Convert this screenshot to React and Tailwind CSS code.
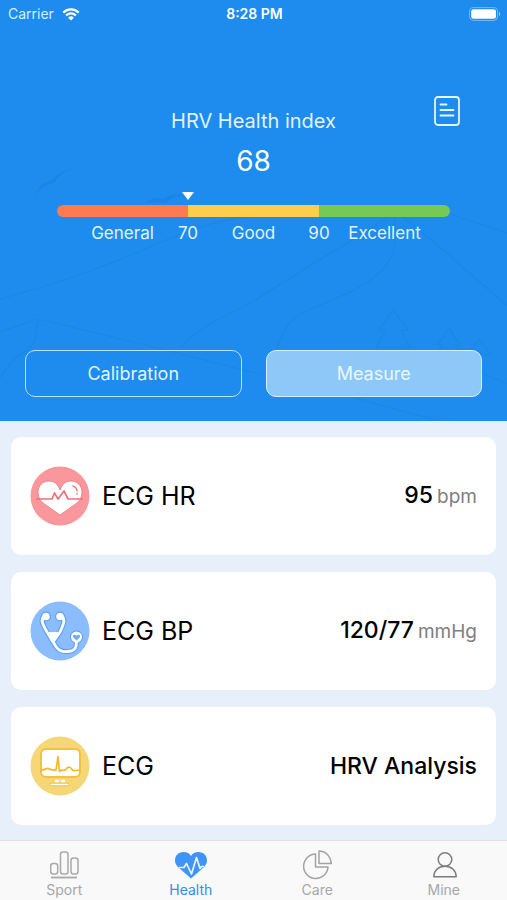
import React from "react";
import clsx from "clsx";

function WifiIcon() {
  return (
    <svg viewBox="0 0 18 13" className="h-[13px] w-[18px]" fill="none">
      <path d="M1.3 4.6a11 11 0 0 1 15.4 0" stroke="#fff" strokeWidth="2.2" />
      <path d="M4.1 7.4a7 7 0 0 1 9.8 0" stroke="#fff" strokeWidth="2.1" />
      <path d="M9 12.6 6.1 9.7a4.1 4.1 0 0 1 5.8 0z" fill="#fff" />
    </svg>
  );
}

function BatteryIcon() {
  return (
    <svg viewBox="0 0 32 14" className="h-[14px] w-8" fill="none">
      <rect x="0.6" y="0.6" width="28" height="12.8" rx="4" stroke="#fff" strokeOpacity="0.4" />
      <rect x="2.2" y="2.2" width="24.8" height="9.6" rx="2.4" fill="#fff" />
      <path d="M30 4.8c1.6.6 1.6 3.8 0 4.4z" fill="#fff" fillOpacity="0.5" />
    </svg>
  );
}

function ReportIcon() {
  return (
    <svg viewBox="0 0 26 30" className="h-[30px] w-[26px]" fill="none" stroke="#e4f6ff" strokeWidth="1.8" strokeLinecap="round">
      <rect x="1" y="1" width="24" height="28" rx="3" />
      <path d="M6.5 8.5h6M6.5 14h13M6.5 19.5h13" />
    </svg>
  );
}

// Faint mountain scene behind the header
function Landscape() {
  return (
    <svg
      viewBox="0 0 507 421"
      preserveAspectRatio="xMidYMid slice"
      className="absolute inset-0 h-full w-full"
      fill="none"
      stroke="#1a80dc"
      strokeOpacity="0.45"
      strokeWidth="1.2"
    >
      <path d="M0 299C50 286 100 269 150 247S215 222 260 214" />
      <path d="M0 332 37 319M38 319l-2 16c-1 10-8 15-16 20S5 370 0 378" />
      <path d="M38 319 150 346 262 375M355 398l95 26" />
      <path d="M180 348c20-22 42-30 70-45 35-21 70-45 105-64l40-27" />
      <path d="M395 212v32c-5 35-45 49-85 65-20 8-27 20-33 40" />
      <path d="M451 214c20 8 38 12 56 19M400 215c40 30 70 60 107 90" />
      <path d="M393 310l-14 20h6l-9 18h34l-9-18h7zM449 328l-11 17h5l-5 6h22l-5-6h5zM479 339l-12 16h24zM462 364l45 20" />
      <g fill="#1a7edb" stroke="none" fillOpacity="0.5">
        <path d="M35 195c5-12 11-12 17-15 5-6 9-8 17-11-7 5-11 8-14 13-7 4-13 3-20 13z" />
        <path d="M145 204c6-7 12-6 19-5 5-4 11-6 20-4-8 1-14 3-18 9-6-3-13-2-21 0z" />
      </g>
    </svg>
  );
}

function HeartRateIcon() {
  return (
    <svg viewBox="0 0 60 60" className="size-[60px]" fill="none">
      <circle cx="30" cy="30" r="29.5" fill="#f9979c" />
      <path
        d="M30 49 13 37C9.5 34 8 30 8 26c0-6 4.5-11 11-11 5 0 9 3 11 9 2-6 6-9 11-9 6.5 0 11 5 11 11 0 4-1.5 8-5 11z"
        fill="#fff"
        stroke="#f58489"
      />
      <path d="M6 33h16l2.5-6 3.5 6 6-8 4 8h15" stroke="#ef7074" strokeWidth="1.7" strokeLinejoin="round" />
      <path d="M43 20c2.5 1 4 3 4 5M47 27.5v.5" stroke="#f37c81" strokeWidth="1.5" strokeLinecap="round" />
    </svg>
  );
}

function StethoscopeIcon() {
  return (
    <svg viewBox="0 0 60 60" className="size-[60px]" fill="none" strokeLinecap="round" strokeLinejoin="round">
      <circle cx="30" cy="30" r="29.5" fill="#8bbcfd" />
      <g stroke="#5b9ff8" strokeWidth="5">
        <path d="M14 15c-4 4-1 9 3 16l6 10M32 15c4 4 1 9-2 16l-7 10" />
        <path d="M23 40c4 10 9 11 15 10.5 8-.5 8.5-5.5 8.5-10" />
        <circle cx="16" cy="15.5" r="2.5" />
        <circle cx="30" cy="15.5" r="2.5" />
        <circle cx="46.5" cy="36" r="4" />
      </g>
      <path d="M17 31h13l-7 10z" fill="#fff" />
      <g stroke="#fff" strokeWidth="2.8">
        <path d="M14 15c-4 4-1 9 3 16l6 10M32 15c4 4 1 9-2 16l-7 10" />
        <path d="M23 40c4 10 9 11 15 10.5 8-.5 8.5-5.5 8.5-10" />
      </g>
      <circle cx="16" cy="15.5" r="3.8" fill="#fff" />
      <circle cx="30" cy="15.5" r="3.8" fill="#fff" />
      <circle cx="46.5" cy="36" r="5.5" fill="#fff" />
      <path d="M46.5 39.5 43 36c-.5-2.5 2.5-3 3.500-1 1-2 4-1.5 3.5 1z" fill="#6dabfa" />
    </svg>
  );
}

function MonitorIcon() {
  return (
    <svg viewBox="0 0 60 60" className="size-[60px]" fill="none" strokeLinecap="round" strokeLinejoin="round">
      <circle cx="30" cy="30" r="29.5" fill="#f6d777" />
      <rect x="11" y="13" width="39" height="28" rx="5" fill="#fff" stroke="#f2c23a" strokeWidth="2" />
      <path d="M12 34c3 0 4-2 6.5-1.5 2.5 2 5 1.5 7.5 1.5l2-13.5 1.5 15 2-1.5c2 .5 3 .5 4.5-.5 2-4 5-2 6 0s4 1 7 .5" stroke="#efbb2a" strokeWidth="1.7" />
      <path d="M21 48.5h17" stroke="#f0c23c" strokeWidth="3.4" />
      <path d="M21 48.5h17" stroke="#fff" strokeWidth="1.4" />
      <path d="M26 45h2M32 45h2" stroke="#fff" strokeWidth="2.6" />
    </svg>
  );
}

function SportIcon() {
  return (
    <svg viewBox="0 0 30 30" className="size-[30px]" fill="none" stroke="#a9a9a9" strokeWidth="1.5">
      <rect x="1.7" y="13.5" width="7" height="10.5" rx="2.5" />
      <rect x="11.5" y="2" width="7.5" height="22" rx="2.5" />
      <rect x="22" y="8" width="7" height="16" rx="2.5" />
      <path d="M2 27.5h26" strokeWidth="1.8" />
    </svg>
  );
}

function HealthIcon() {
  return (
    <svg viewBox="0 0 32 30" className="h-[30px] w-8" fill="none">
      <path d="M16 28.5 3.5 17.5C1 15 0 13 0 10.5 0 5.5 3.5 2 8.5 2c3.5 0 6 1.5 7.5 4 1.5-2.5 4-4 7.5-4 5 0 8.5 3.5 8.5 8.5 0 2.5-1 4.5-3.5 7z" fill="#3f94f9" />
      <path d="M4 17.5h5l2.5-4 5 10.5 5-16.5 3.5 11 1.5-2H29" stroke="#e8f4ff" strokeWidth="1.7" strokeLinejoin="round" />
    </svg>
  );
}

function CareIcon() {
  return (
    <svg viewBox="0 0 30 30" className="size-[30px]" fill="none" stroke="#a3a3a3" strokeWidth="1.5" strokeLinejoin="round">
      <path d="M13.5 4A12.2 12.2 0 1 0 26 17H13.5z" />
      <path d="M17 1v12.5h12.3C29 7 24 1 17 1z" />
    </svg>
  );
}

function MineIcon() {
  return (
    <svg viewBox="0 0 30 30" className="size-[30px]" fill="none" stroke="#7d7d7d" strokeWidth="1.5" strokeLinejoin="round">
      <circle cx="16" cy="9.5" r="6.8" />
      <path d="M4.8 26.8c0-6 4.5-10.5 11.2-10.5s11.2 4.5 11.2 10.5z" />
    </svg>
  );
}

const metrics = [
  { label: "ECG HR", value: "95", unit: "bpm", icon: HeartRateIcon },
  { label: "ECG BP", value: "120/77", unit: "mmHg", icon: StethoscopeIcon },
  { label: "ECG", value: "HRV Analysis", icon: MonitorIcon },
];

const tabs = [
  { label: "Sport", icon: SportIcon },
  { label: "Health", icon: HealthIcon, active: true },
  { label: "Care", icon: CareIcon },
  { label: "Mine", icon: MineIcon },
];

function StatusBar() {
  return (
    <div className="grid h-7 grid-cols-3 items-center pl-2 pr-1.5 text-sm text-white">
      <div className="flex items-center gap-2">
        <span className="text-[#d9edff]">Carrier</span>
        <WifiIcon />
      </div>
      <span className="text-center font-semibold">8:28 PM</span>
      <div className="justify-self-end">
        <BatteryIcon />
      </div>
    </div>
  );
}

function IndexScale() {
  return (
    <div className="px-8">
      <div className="grid grid-cols-12">
        <svg viewBox="0 0 12 8" className="col-span-2 col-start-4 h-2 w-3 justify-self-center">
          <path d="M0 0h12L6 8z" fill="#fff" />
        </svg>
      </div>
      <div className="mt-[5px] grid h-3 grid-cols-3 overflow-hidden rounded-full">
        <div className="bg-[#ff7a50]" />
        <div className="bg-[#fdce4b]" />
        <div className="bg-[#74ca55]" />
      </div>
      <div className="mt-1.5 grid grid-cols-12 text-center text-[17px] leading-5 text-[#e0f3ff]">
        <span className="col-span-4 col-start-1 row-start-1">General</span>
        <span className="col-span-2 col-start-4 row-start-1">70</span>
        <span className="col-span-4 col-start-5 row-start-1">Good</span>
        <span className="col-span-2 col-start-8 row-start-1">90</span>
        <span className="col-span-4 col-start-9 row-start-1">Excellent</span>
      </div>
    </div>
  );
}

function MetricCard({ label, value, unit, icon: Icon }) {
  return (
    <section className="flex h-[118px] items-center gap-3 rounded-[10px] bg-white px-[19px] text-black">
      <Icon />
      <h2 className="flex-1 text-[25px] leading-8">{label}</h2>
      <p className="flex items-baseline gap-1 text-[23px] leading-8 font-medium">
        {value}
        {unit && <span className="text-[19px] font-normal text-[#808080]">{unit}</span>}
      </p>
    </section>
  );
}

export default function App() {
  return (
    <div className="flex min-h-screen flex-col bg-[#e6effa] font-['Inter',sans-serif]">
      <header className="relative bg-[#1d8cee]">
        <Landscape />
        <div className="relative">
          <StatusBar />
          <div className="px-[25px] pb-6 pt-[68px]">
            <div className="grid grid-cols-[1fr_auto_1fr] items-start">
              <div className="col-start-2 pt-[13px] text-center">
                <h1 className="text-xl leading-6 text-[#e0f3ff]">HRV Health index</h1>
                <p className="mt-3 text-[28px] leading-8 text-white">68</p>
              </div>
              <button type="button" aria-label="Report" className="mr-[22px] justify-self-end">
                <ReportIcon />
              </button>
            </div>
            <div className="mt-[15px]">
              <IndexScale />
            </div>
            <div className="mt-[107px] grid grid-cols-2 gap-6 text-lg">
              <button type="button" className="h-[47px] rounded-[10px] border border-[#b9e2ff] text-[#e0f3ff]">
                Calibration
              </button>
              <button type="button" className="h-[47px] rounded-[10px] border border-[#d4efff] bg-[#8dc8f8] text-[#e9f7ff]">
                Measure
              </button>
            </div>
          </div>
        </div>
      </header>

      <main className="flex flex-1 flex-col gap-[17px] px-[11px] pb-[15px] pt-4">
        {metrics.map((metric) => (
          <MetricCard key={metric.label} {...metric} />
        ))}
      </main>

      <nav className="grid h-[60px] grid-cols-4 border-t border-[#dcdfe4] bg-[#f9f9f9] pl-px">
        {tabs.map(({ label, icon: Icon, active }) => (
          <a
            key={label}
            href="#"
            className={clsx(
              "flex flex-col items-center pt-[9px] text-sm",
              active ? "text-[#3290ee]" : "text-[#a3a8ad]"
            )}
          >
            <Icon />
            {label}
          </a>
        ))}
      </nav>
    </div>
  );
}
